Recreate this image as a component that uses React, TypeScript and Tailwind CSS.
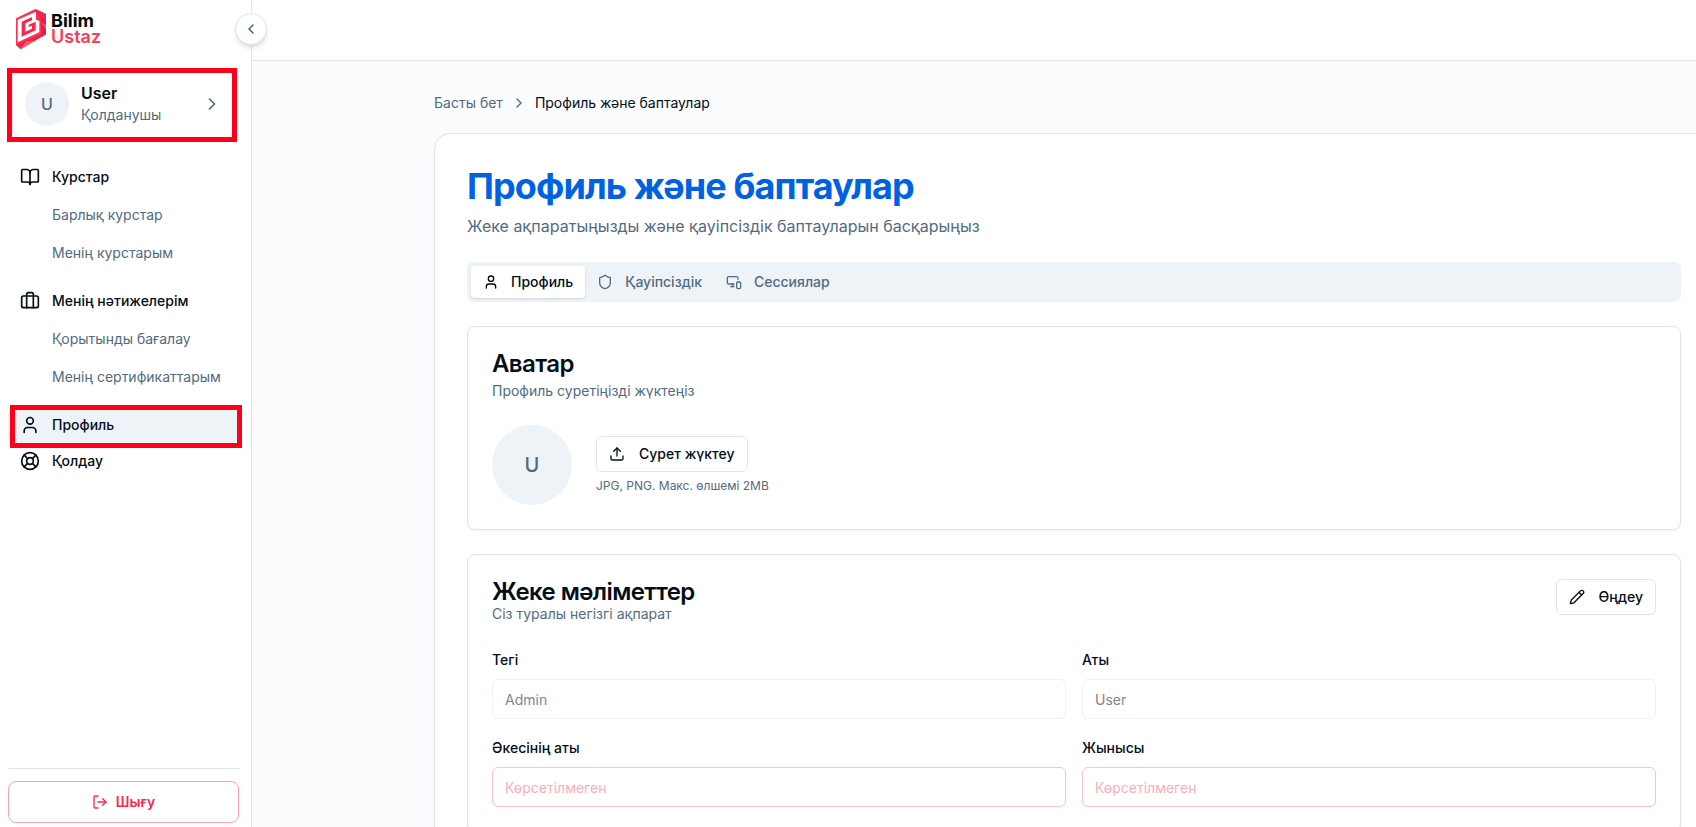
import React, { useState } from "react";
import {
  BookOpen,
  Briefcase,
  ChevronLeft,
  ChevronRight,
  LifeBuoy,
  LogOut,
  MonitorSmartphone,
  Pencil,
  Shield,
  Upload,
  User,
} from "lucide-react";

const Logo = () => (
  <a href="#" className="flex items-center gap-[5px]" aria-label="Bilim Ustaz">
    <svg viewBox="0 0 90 120" className="h-10 w-[30px]">
      <path d="M0 28 58 0 90 15 90 76 14 120 0 108Z" fill="#ff3350" />
      <path d="M58 0 90 15 90 32 72 24 60 14Z" fill="#f0264a" />
      <path d="M72 24 90 32 90 76 76 84 76 40Z" fill="#e21f45" />
      <path d="M76 40 90 48 90 62Z" fill="#ff4c61" />
      <path d="M0 108 76 74 90 76 14 120Z" fill="#f0244a" />
      <path d="M14 120 30 98 56 95 40 104Z" fill="#ff5c6c" />
      <path d="M5 32 60 8 60 32 70 36 70 70 5 100Z" fill="#fff" />
      <path d="M17 38 48 24 48 34 28 43 28 68 48 59 48 50 38 54 38 47 59 38 59 64 17 83Z" fill="#f5284b" />
    </svg>
    <span className="text-lg leading-4">
      <span className="block font-bold text-black">Bilim</span>
      <span className="block font-semibold text-[#ff3b52]">Ustaz</span>
    </span>
  </a>
);

const NavItem = ({ label, Icon, active }: { label: string; Icon: any; active?: boolean }) => (
  <a
    href="#"
    className={`flex h-9 items-center gap-3 rounded-lg px-3 text-sm font-medium text-[#020e18] ${active ? "bg-[#eef3f8]" : ""}`}
  >
    <Icon className="h-5 w-5" />
    {label}
  </a>
);

const SubItem = ({ label }: { label: string }) => (
  <a href="#" className="flex h-9 items-center pl-11 text-sm text-[#526b80]">
    {label}
  </a>
);

const OutlineButton = ({ label, Icon }: { label: string; Icon: any }) => (
  <button className="flex h-9 items-center gap-3.5 rounded-md border border-[#dbe5ee] bg-white px-3 text-sm font-medium text-[#020e18]">
    <Icon className="h-4 w-4" />
    {label}
  </button>
);

const Field = ({ id, label, value, invalid }: { id: string; label: string; value?: string; invalid?: boolean }) => (
  <div className="flex flex-col gap-1.5">
    <label htmlFor={id} className="text-sm leading-[26px] font-medium text-[#020e18]">
      {label}
    </label>
    <input
      id={id}
      disabled
      defaultValue={value}
      placeholder="Көрсетілмеген"
      className={`h-10 w-full rounded-md border bg-white px-3 text-sm text-[#80868b] placeholder:text-[#ffadb6] ${
        invalid ? "border-[#ffc0c7]" : "border-[#edf2f6]"
      }`}
    />
  </div>
);

const tabs = [
  { label: "Профиль", Icon: User },
  { label: "Қауіпсіздік", Icon: Shield },
  { label: "Сессиялар", Icon: MonitorSmartphone },
];

export default function App() {
  const [tab, setTab] = useState("Профиль");

  return (
    <div className="flex h-screen overflow-hidden bg-[#fafcfe] font-['Inter',sans-serif] text-[#020e18]">
      {/* Sidebar */}
      <aside className="relative flex w-[252px] shrink-0 flex-col border-r border-[#dbe5ee] bg-white">
        <div className="px-4 pt-[9px]">
          <Logo />
        </div>
        <button
          aria-label="Collapse sidebar"
          className="absolute top-[13px] -right-4 z-10 flex h-8 w-8 items-center justify-center rounded-full border border-[#dbe5ee] bg-white text-[#3f566a] shadow-md"
        >
          <ChevronLeft className="h-4 w-4" />
        </button>

        {/* User card */}
        <div className="relative mt-5 mr-4 ml-3">
          <a href="#" className="flex h-[70px] items-center gap-3 rounded-xl border border-[#dbe5ee] bg-white px-3">
            <span className="flex h-11 w-11 items-center justify-center rounded-full bg-[#eef3f8] text-base font-medium text-[#526b80]">
              U
            </span>
            <span className="flex-1 leading-[22px]">
              <span className="block text-base leading-[22px] font-semibold">User</span>
              <span className="block text-sm leading-[22px] text-[#526b80]">Қолданушы</span>
            </span>
            <ChevronRight className="h-5 w-5 text-[#526b80]" />
          </a>
          <div className="pointer-events-none absolute -top-px -right-0.5 -bottom-[3px] -left-[5px] border-5 border-[#ff0018]" />
        </div>

        <nav className="mt-5 mr-3 ml-2 flex flex-col">
          <NavItem label="Курстар" Icon={BookOpen} />
          <div className="my-0.5 flex flex-col gap-0.5">
            <SubItem label="Барлық курстар" />
            <SubItem label="Менің курстарым" />
          </div>
          <div className="mt-2.5">
            <NavItem label="Менің нәтижелерім" Icon={Briefcase} />
          </div>
          <div className="my-0.5 flex flex-col gap-0.5">
            <SubItem label="Қорытынды бағалау" />
            <SubItem label="Менің сертификаттарым" />
          </div>
          <div className="relative mt-2.5">
            <NavItem label="Профиль" Icon={User} active />
            <div className="pointer-events-none absolute -top-0.5 -right-[3px] -bottom-[5px] left-0.5 border-5 border-[#ff0018]" />
          </div>
          <NavItem label="Қолдау" Icon={LifeBuoy} />
        </nav>

        <div className="mt-auto mr-3 mb-1 ml-2 border-t border-[#dbe5ee] pt-3">
          <button className="flex h-[42px] w-full items-center justify-center gap-2 rounded-lg border border-[#ff9fb0] text-sm font-semibold text-[#ff2450]">
            <LogOut className="h-4 w-4" />
            Шығу
          </button>
        </div>
      </aside>

      {/* Content */}
      <div className="flex min-w-0 flex-1 flex-col overflow-hidden">
        <header className="h-[61px] shrink-0 border-b border-[#dbe5ee] bg-white" />

        <main className="flex flex-1 overflow-hidden pt-8 pl-[182px]">
          <div className="w-7xl shrink-0">
            <nav aria-label="Breadcrumb" className="flex h-5 items-center gap-2 text-sm">
              <a href="#" className="text-[#526b80]">
                Басты бет
              </a>
              <ChevronRight className="h-4 w-4 text-[#526b80]" />
              <span>Профиль және баптаулар</span>
            </nav>

            <section className="mt-5 rounded-2xl border border-[#dbe5ee] bg-white p-8">
              <h1 className="text-4xl leading-10 font-bold tracking-tight text-[#0061e3]">Профиль және баптаулар</h1>
              <p className="mt-2 text-base text-[#526b80]">Жеке ақпаратыңызды және қауіпсіздік баптауларын басқарыңыз</p>

              <div role="tablist" className="mt-6 flex h-10 items-center rounded-md bg-[#eef3f8] p-1">
                {tabs.map(({ label, Icon }) => (
                  <button
                    key={label}
                    role="tab"
                    aria-selected={tab === label}
                    onClick={() => setTab(label)}
                    className={`flex h-8 items-center gap-3 rounded px-3 text-sm font-medium ${
                      tab === label ? "bg-white text-[#020e18] shadow-sm" : "text-[#526b80]"
                    }`}
                  >
                    <Icon className="h-4 w-4" />
                    {label}
                  </button>
                ))}
              </div>

              {/* Avatar */}
              <div className="mt-6 rounded-lg border border-[#dbe5ee] bg-white p-6 shadow-xs">
                <h2 className="text-2xl leading-[26px] font-semibold tracking-tight">Аватар</h2>
                <p className="mt-1 text-sm text-[#526b80]">Профиль суретіңізді жүктеңіз</p>
                <div className="mt-6 flex items-center gap-6">
                  <div className="flex h-20 w-20 items-center justify-center rounded-full bg-[#eef3f8] text-xl font-medium text-[#526b80]">
                    U
                  </div>
                  <div className="flex flex-col items-start gap-1.5">
                    <OutlineButton label="Сурет жүктеу" Icon={Upload} />
                    <p className="text-xs text-[#526b80]">JPG, PNG. Макс. өлшемі 2MB</p>
                  </div>
                </div>
              </div>

              {/* Personal details */}
              <div className="mt-6 rounded-lg border border-[#dbe5ee] bg-white p-6 shadow-xs">
                <div className="flex items-start justify-between">
                  <div>
                    <h2 className="text-2xl leading-[26px] font-semibold tracking-tight">Жеке мәліметтер</h2>
                    <p className="text-sm leading-[18px] text-[#526b80]">Сіз туралы негізгі ақпарат</p>
                  </div>
                  <OutlineButton label="Өңдеу" Icon={Pencil} />
                </div>
                <form className="mt-6 grid grid-cols-2 gap-4">
                  <Field id="lastName" label="Тегі" value="Admin" />
                  <Field id="firstName" label="Аты" value="User" />
                  <Field id="middleName" label="Әкесінің аты" invalid />
                  <Field id="gender" label="Жынысы" invalid />
                </form>
              </div>
            </section>
          </div>
        </main>
      </div>
    </div>
  );
}
